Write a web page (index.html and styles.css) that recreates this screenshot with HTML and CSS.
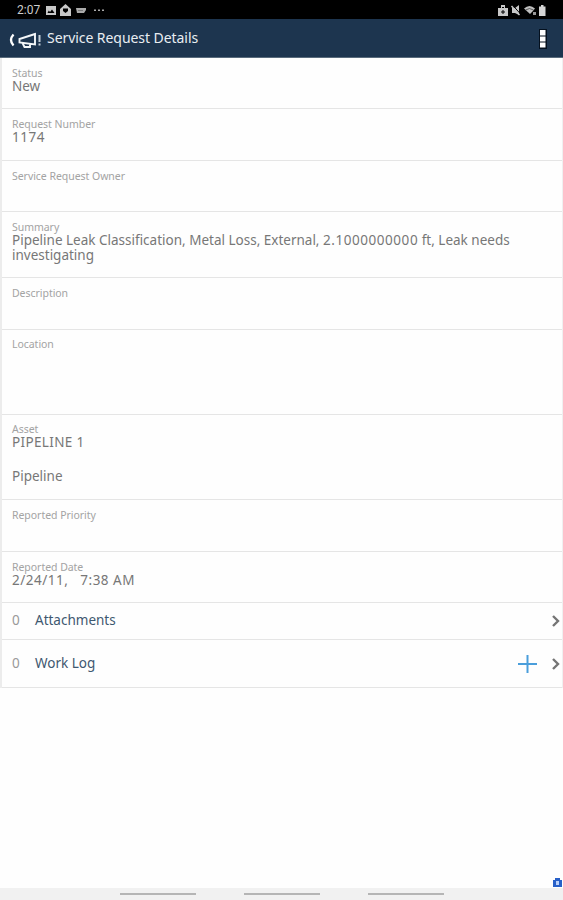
FILE: index.html
```html
<!DOCTYPE html>
<html lang="en">
    <head>
        <title>Service Request Details</title>
        <meta charset="utf-8" />
        <meta name="viewport" content="width=device-width, initial-scale=1.0" />
        <link rel="stylesheet" href="styles.css">
    </head>
    <body>
        <div id="statusbar">
            <span class="clock">2:07</span>
            <svg width="62" height="13" viewBox="0 0 62 13">
                <path fill="#c8c8c8" fill-rule="evenodd" d="M1 2h10v9H1zM2.500 9h7L7 5.500 5 8 3.800 6.500z" />
                <path fill="#c8c8c8" fill-rule="evenodd" d="M15 5L20.500 0 26 5V12H15zM18 4.500h5v2.500L20.500 9 18 7z" />
                <path fill="#aaa" d="M31 4h10v2l-2 3h-7z" />
                <path stroke="#777" d="M33 6.500h5" />
                <path fill="#aaa" d="M49 5.500h2v1.500h-2zM53 5.500h2v1.500h-2zM57 5.500h2v1.500h-2z" />
            </svg>
            <svg class="right" width="50" height="13" viewBox="0 0 50 13">
                <path fill="#c8c8c8" fill-rule="evenodd" d="M0 4h3V1h4v3h3v8H0zM4 3h2v1H4zM4.500 6v1.500H3v1h1.500V10h1V8.500H7v-1H5.500V6z" />
                <path fill="#c8c8c8" d="M14 4h3l4-3v10l-4-2h-3z" />
                <path stroke="#000" d="M14.500 1l8 9" />
                <path stroke="#c8c8c8" stroke-width="1.500" d="M13.500 2l8 9" />
                <path fill="#c0c0c0" d="M26 4.500q5.500-5 11 0L34 8 32 10z" />
                <path fill="none" stroke="#333" stroke-width="0.700" d="M27.500 6q4-3 8 0" />
                <path fill="#999" d="M35 8h3v3h-3z" />
                <path fill="#d5d5d5" d="M41 2.500h2V1h2.500v1.500h2V12H41z" />
            </svg>
        </div>
        <div id="header">
            <svg width="34" height="18" viewBox="0 0 34 18">
                <path fill="none" stroke="#fff" stroke-width="2.300" d="M6.500 4.500Q1.500 10 6.500 15.500" />
                <path fill="none" stroke="#f4f7f9" stroke-width="1.900" d="M28 4L12.500 9v3.500L28 14.500zM15.500 13l2 4H23v-3" />
                <path stroke="#c5d0da" stroke-width="2" d="M32.500 5v7M32.500 13.500v2" />
            </svg>
            <h1>Service Request Details</h1>
            <svg class="right" width="8" height="20" viewBox="0 0 8 20">
                <path fill="#04101e" d="M0 0h8v20H0z" />
                <path fill="#fff" d="M1 1h5.500v5.500H1zM1 7.500h5.500v5H1zM1 13.500h5.500v5H1z" />
            </svg>
        </div>
        <div id="details">
            <div class="field first">
                <label>Status</label>
                <p>New</p>
            </div>
            <div class="field">
                <label>Request Number</label>
                <p class="number">1174</p>
            </div>
            <div class="field short">
                <label>Service Request Owner</label>
            </div>
            <div class="field summary">
                <label>Summary</label>
                <p>Pipeline Leak Classification, Metal Loss, External, <span class="number">2.1000000000</span> ft, Leak needs investigating</p>
            </div>
            <div class="field">
                <label>Description</label>
            </div>
            <div class="field tall">
                <label>Location</label>
            </div>
            <div class="field tall">
                <label>Asset</label>
                <p class="caps">PIPELINE 1</p>
                <p class="second">Pipeline</p>
            </div>
            <div class="field">
                <label>Reported Priority</label>
            </div>
            <div class="field short">
                <label>Reported Date</label>
                <p class="date">2/24/11, &nbsp; 7:38 AM</p>
            </div>
            <div class="link">
                <span class="count">0</span>
                <span>Attachments</span>
                <svg class="right" width="10" height="14" viewBox="0 0 10 14">
                    <path fill="none" stroke="#757575" stroke-width="2.400" d="M2 2l5 5-5 5" />
                </svg>
            </div>
            <div class="link worklog">
                <span class="count">0</span>
                <span>Work Log</span>
                <svg class="right" width="19" height="20" viewBox="0 0 19 20">
                    <path stroke="#4a9edb" stroke-width="2" d="M0 10h19M9.500 1v18" />
                </svg>
                <svg width="10" height="14" viewBox="0 0 10 14">
                    <path fill="none" stroke="#757575" stroke-width="2.400" d="M2 2l5 5-5 5" />
                </svg>
            </div>
        </div>
        <div id="badge">
            <svg width="9" height="9" viewBox="0 0 9 9">
                <path fill="#2860c8" d="M0 2h2V0h5v2h2v7H0z" />
                <path fill="#b9d0fa" d="M3 3h3v4H3z" />
            </svg>
        </div>
        <div id="navbar">
            <span></span>
            <span></span>
            <span></span>
        </div>
    </body>
</html>
```
FILE: styles.css
```css
html, body {
    margin: 0px;
    padding: 0px;
    background: #fefefe;
    font-family: "Noto Sans", sans-serif;
}
body {
    display: flex;
    flex-direction: column;
    height: 900px;
    overflow: hidden;
}
svg {
    display: block;
    flex: none;
}
.right {
    margin-left: auto;
}
#statusbar {
    display: flex;
    align-items: center;
    box-sizing: border-box;
    height: 19px;
    padding: 1px 15px 0px 17px;
    background: #000;
}
.clock {
    width: 28px;
    color: #ccc;
    font-family: Roboto, sans-serif;
    font-size: 12px;
}
#header {
    display: flex;
    align-items: center;
    box-sizing: border-box;
    height: 39px;
    padding: 2px 16px 0px 7px;
    border-bottom: 1px solid #596b7c;
    background: #1d354f;
}
h1 {
    margin: -4px 0px 0px 6px;
    color: #e9eef2;
    font-size: 14px;
    font-weight: 400;
    letter-spacing: -0.06px;
}
#details {
    border-left: 2px solid #ececec;
    border-right: 1px solid #f0f0f0;
    color: #777;
}
.field {
    box-sizing: border-box;
    height: 52px;
    padding: 9px 10px 0px;
    border-bottom: 1px solid #e5e5e5;
}
.first, .short {
    height: 51px;
}
.summary {
    height: 66px;
}
.tall {
    height: 85px;
    padding-top: 8px;
}
label {
    display: block;
    height: 12px;
    color: #a3a3a3;
    font-size: 10.5px;
    line-height: 12px;
    letter-spacing: -0.04px;
}
p {
    margin: 0px;
    font-size: 13.5px;
    line-height: 14.5px;
}
.number {
    letter-spacing: 0.55px;
}
.caps {
    letter-spacing: 0.35px;
}
.date {
    letter-spacing: 0.5px;
}
.second {
    margin-top: 19px;
}
.link {
    display: flex;
    align-items: center;
    box-sizing: border-box;
    height: 37px;
    padding: 0px 1px 2px 10px;
    border-bottom: 1px solid #e5e5e5;
    color: #3e5870;
    font-size: 13.5px;
}
.worklog {
    height: 48px;
}
.count {
    width: 23px;
    color: #999;
}
.link svg {
    margin-top: 2px;
}
.worklog .right {
    margin-right: 14px;
}
#badge {
    display: flex;
    justify-content: flex-end;
    margin-top: auto;
    padding: 0px 1px 1px 0px;
}
#navbar {
    display: flex;
    align-items: center;
    justify-content: center;
    gap: 48px;
    height: 12px;
    background: #f1f1f1;
}
#navbar span {
    width: 76px;
    height: 2px;
    background: #b5b5b5;
}
```
